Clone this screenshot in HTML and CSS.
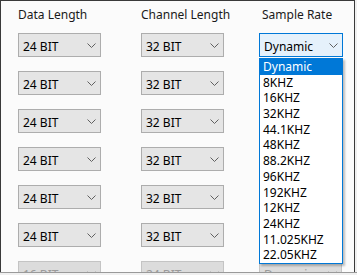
FILE: index.html
```html
<!DOCTYPE html>
<html lang="en">
<head>
    <meta charset="UTF-8">
    <meta name="viewport" content="width=device-width, initial-scale=1.0">
    <title>Audio Format Settings</title>
    <link rel="stylesheet" href="styles.css">
</head>
<body>
    <div class="screen">
        <div class="panel">
            <div class="grid">
                <div class="head">Data Length</div>
                <div class="head">Channel Length</div>
                <div class="head rate">Sample Rate</div>

                <div class="combo"><span>24 BIT</span><svg class="chev" width="9" height="5"><polyline points="0.5,0.5 4.5,4.5 8.5,0.5"/></svg></div>
                <div class="combo"><span>32 BIT</span><svg class="chev" width="9" height="5"><polyline points="0.5,0.5 4.5,4.5 8.5,0.5"/></svg></div>
                <div class="combo focus"><span>Dynamic</span><svg class="chev" width="9" height="5"><polyline points="0.5,0.5 4.5,4.5 8.5,0.5"/></svg></div>

                <div class="combo"><span>24 BIT</span><svg class="chev" width="9" height="5"><polyline points="0.5,0.5 4.5,4.5 8.5,0.5"/></svg></div>
                <div class="combo"><span>32 BIT</span><svg class="chev" width="9" height="5"><polyline points="0.5,0.5 4.5,4.5 8.5,0.5"/></svg></div>
                <div class="combo"><span>Dynamic</span><svg class="chev" width="9" height="5"><polyline points="0.5,0.5 4.5,4.5 8.5,0.5"/></svg></div>

                <div class="combo"><span>24 BIT</span><svg class="chev" width="9" height="5"><polyline points="0.5,0.5 4.5,4.5 8.5,0.5"/></svg></div>
                <div class="combo"><span>32 BIT</span><svg class="chev" width="9" height="5"><polyline points="0.5,0.5 4.5,4.5 8.5,0.5"/></svg></div>
                <div class="combo"><span>Dynamic</span><svg class="chev" width="9" height="5"><polyline points="0.5,0.5 4.5,4.5 8.5,0.5"/></svg></div>

                <div class="combo"><span>24 BIT</span><svg class="chev" width="9" height="5"><polyline points="0.5,0.5 4.5,4.5 8.5,0.5"/></svg></div>
                <div class="combo"><span>32 BIT</span><svg class="chev" width="9" height="5"><polyline points="0.5,0.5 4.5,4.5 8.5,0.5"/></svg></div>
                <div class="combo"><span>Dynamic</span><svg class="chev" width="9" height="5"><polyline points="0.5,0.5 4.5,4.5 8.5,0.5"/></svg></div>

                <div class="combo"><span>24 BIT</span><svg class="chev" width="9" height="5"><polyline points="0.5,0.5 4.5,4.5 8.5,0.5"/></svg></div>
                <div class="combo"><span>32 BIT</span><svg class="chev" width="9" height="5"><polyline points="0.5,0.5 4.5,4.5 8.5,0.5"/></svg></div>
                <div class="combo"><span>Dynamic</span><svg class="chev" width="9" height="5"><polyline points="0.5,0.5 4.5,4.5 8.5,0.5"/></svg></div>

                <div class="combo"><span>24 BIT</span><svg class="chev" width="9" height="5"><polyline points="0.5,0.5 4.5,4.5 8.5,0.5"/></svg></div>
                <div class="combo"><span>32 BIT</span><svg class="chev" width="9" height="5"><polyline points="0.5,0.5 4.5,4.5 8.5,0.5"/></svg></div>
                <div class="combo"><span>Dynamic</span><svg class="chev" width="9" height="5"><polyline points="0.5,0.5 4.5,4.5 8.5,0.5"/></svg></div>

                <div class="combo disabled"><span>16 BIT</span><svg class="chev" width="9" height="5"><polyline points="0.5,0.5 4.5,4.5 8.5,0.5"/></svg></div>
                <div class="combo disabled"><span>24 BIT</span><svg class="chev" width="9" height="5"><polyline points="0.5,0.5 4.5,4.5 8.5,0.5"/></svg></div>
                <div class="combo disabled"><span>Dynamic</span><svg class="chev" width="9" height="5"><polyline points="0.5,0.5 4.5,4.5 8.5,0.5"/></svg></div>
            </div>

            <ul class="dropdown">
                <li class="selected">Dynamic</li>
                <li>8KHZ</li>
                <li>16KHZ</li>
                <li>32KHZ</li>
                <li>44.1KHZ</li>
                <li>48KHZ</li>
                <li>88.2KHZ</li>
                <li>96KHZ</li>
                <li>192KHZ</li>
                <li>12KHZ</li>
                <li>24KHZ</li>
                <li>11.025KHZ</li>
                <li>22.05KHZ</li>
            </ul>
        </div>
    </div>
</body>
</html>
```

FILE: styles.css
```css
body {
    margin: 0;
    background: #f0f0f0;
    font-family: 'Noto Sans', 'Open Sans', sans-serif;
    font-size: 12px;
    color: #000;
}
.screen {
    width: 357px;
    border-bottom: 1px solid #9a9a9a;
}
.panel {
    position: relative;
    width: 353px;
    height: 271px;
    border: 1px solid #3a3a3a;
    border-bottom: none;
    background: #fbfbfb;
    overflow: hidden;
}
.grid {
    display: grid;
    grid-template-columns: 123px 118px 84px;
    grid-template-rows: 12px;
    grid-auto-rows: 24px;
    row-gap: 14px;
    padding: 6px 0 0 17px;
}
.head {
    height: 12px;
    line-height: 16px;
    color: #1a1a1a;
    white-space: nowrap;
}
.head.rate {
    margin-left: 3px;
}
.combo {
    width: 83px;
    height: 24px;
    box-sizing: border-box;
    border: 1px solid #adadad;
    background: #e5e5e5;
    display: flex;
    align-items: center;
    justify-content: space-between;
    padding: 3px 4px 0 4px;
    line-height: 16px;
}
.combo.focus {
    width: 84px;
    border-color: #0078d7;
    background: #e5f1fb;
}
.combo.disabled {
    background: #dcdcdc;
    border-color: #c4c4c4;
    color: #9a9a9a;
}
.chev {
    display: block;
    margin-bottom: 3px;
}
.chev polyline {
    fill: none;
    stroke: #606060;
    stroke-width: 1;
}
.disabled .chev polyline {
    stroke: #aaa;
}
.dropdown {
    position: absolute;
    left: 258px;
    top: 57px;
    width: 82px;
    margin: 0;
    padding: 0;
    list-style: none;
    border: 1px solid #0078d7;
    background: #fff;
    box-shadow: 2px 2px 2px rgba(0, 0, 0, 0.25);
}
.dropdown li {
    height: 15.7px;
    line-height: 15.7px;
    padding-left: 3px;
    white-space: nowrap;
}
.dropdown li.selected {
    background: #0078d7;
    color: #fff;
}
```
